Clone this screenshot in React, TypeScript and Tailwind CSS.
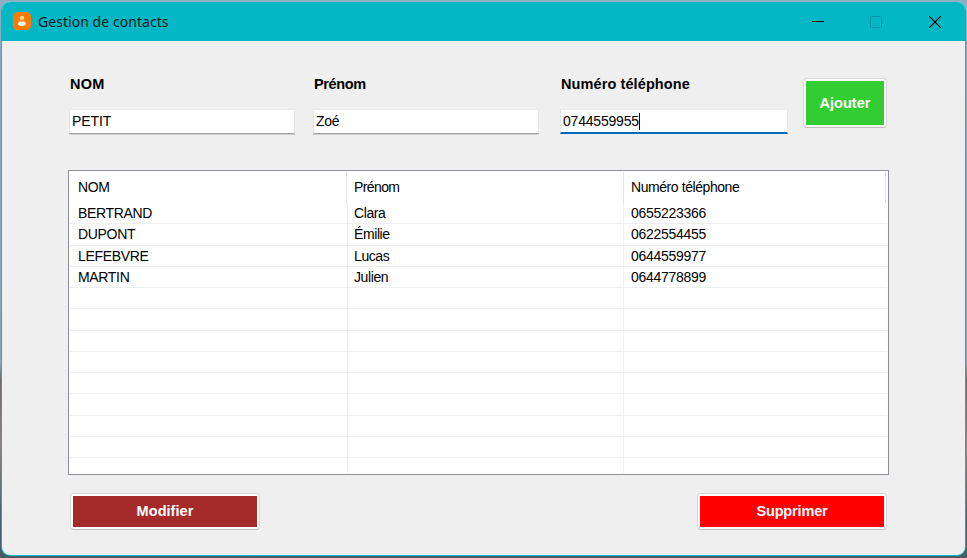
import React from "react";

const contacts = [
  ["BERTRAND", "Clara", "0655223366"],
  ["DUPONT", "Émilie", "0622554455"],
  ["LEFEBVRE", "Lucas", "0644559977"],
  ["MARTIN", "Julien", "0644778899"],
];
const rows = Array.from({ length: 12 }, (_, i) => contacts[i] ?? ["", "", ""]);

function Field({ label, value, className, labelClass, valueClass, focused = false }: {
  label: string; value: string; className: string; labelClass: string; valueClass: string; focused?: boolean;
}) {
  return (
    <label className={`block ${className}`}>
      <span className={`block h-[34px] pl-px text-[14.5px] leading-[19px] font-bold whitespace-nowrap ${labelClass}`}>{label}</span>
      <span className={`flex h-[25px] items-center border bg-white ${focused ? "border-x-[#e2e8ee] border-t-[#ececec] border-b-2 border-b-[#0067c0] pl-[2px]" : "border-x-[#e6e6e6] border-t-[#ebebeb] border-b-[#a0a0a0] pb-[2px] pl-[2px] shadow-[0_1px_0_#d0d0d0]"}`}>
        <span className={`text-[14px] leading-[20px] ${valueClass}`}>{value}</span>
        {focused && <span className="h-[17px] w-px bg-black" />}
      </span>
    </label>
  );
}

function ActionButton({ label, outer, fill, text }: { label: string; outer: string; fill: string; text: string }) {
  return (
    <button className={`block rounded-[4px] border border-[#d8d8d8] border-b-[#bebebe] bg-white p-[2px] ${outer}`}>
      <span className={`flex h-full w-full items-center justify-center text-[14.5px] leading-none font-bold text-white ${fill}`}>
        <span className={text}>{label}</span>
      </span>
    </button>
  );
}

export default function App() {
  return (
    <div className="h-[558px] w-[967px] overflow-hidden bg-[linear-gradient(180deg,#8bb1c2_0%,#8da9b5_65%,#6d6867_68%,#8b8583_80%,#425e69_94%,#4a5a63_100%)] pt-[2px] pl-px font-['Liberation_Sans',sans-serif] text-black">
      <div className="flex h-[554px] w-[965px] flex-col overflow-hidden rounded-[9px] border border-t-0 border-[#03b7c5] bg-[#efefef]">
        <header className="flex h-[39px] shrink-0 items-center bg-[#03b7c5] pl-[11px]">
          <svg width="18" height="18" viewBox="0 0 18 18" className="mb-px">
            <rect width="18" height="18" rx="4.5" fill="#ff7b00" />
            <circle cx="9" cy="6" r="2.2" fill="#ffd68a" />
            <path d="M5 12.4C5 10.4 6.6 9.2 7.6 9.2Q9 10.2 10.4 9.2C11.8 9.2 13 10.8 13 12.2Q11.8 14 9 14T5 12.4Z" fill="#fff" />
          </svg>
          <h1 className="ml-[7px] font-['Noto_Sans',sans-serif] text-[14px] leading-[20px] tracking-[0.05px] text-[#071c20]">Gestion de contacts</h1>
          <div className="mr-[24px] ml-auto flex items-center">
            <svg width="12" height="12" viewBox="0 0 12 12"><path d="M0 5.5H12" stroke="#000" /></svg>
            <svg className="ml-[46px]" width="12" height="12" viewBox="0 0 12 12"><rect x=".5" y=".5" width="11" height="11" rx="1" fill="none" stroke="#02929d" /></svg>
            <svg className="ml-[47px]" width="12" height="12" viewBox="0 0 12 12"><path d="M.3.3 11.7 11.7M11.7.3.3 11.7" stroke="#000" strokeWidth="1.2" /></svg>
          </div>
        </header>

        <main className="pt-[34px] pl-[66px]">
          <div className="flex">
            <Field label="NOM" value="PETIT" className="ml-px w-[226px]" labelClass="tracking-[0.3px]" valueClass="tracking-[-0.1px]" />
            <Field label="Prénom" value="Zoé" className="ml-[18px] w-[226px]" labelClass="tracking-[-0.35px]" valueClass="tracking-[-0.3px]" />
            <Field label="Numéro téléphone" value="0744559955" className="ml-[21px] w-[228px]" labelClass="tracking-[0.1px]" valueClass="tracking-[-0.2px]" focused />
            <ActionButton label="Ajouter" outer="ml-[15px] mt-[3px] h-[50px] w-[84px]" fill="bg-[#32cd32]" text="tracking-[0.05px]" />
          </div>

          <section className="mt-[36px] flex h-[305px] w-[821px] flex-col overflow-hidden border border-[#8c8f99] bg-white p-px text-[14px] leading-[20px]">
            <div className="flex h-[31px] shrink-0 items-center">
              <div className="flex h-full w-[277px] items-center border-r border-[#e5e5e5] pb-[2px] pl-[8px] tracking-[-0.4px]">NOM</div>
              <div className="flex h-full w-[277px] items-center border-r border-[#e5e5e5] pb-[2px] pl-[7px] tracking-[-0.6px]">Prénom</div>
              <div className="flex h-full w-[262px] items-center border-r border-[#e5e5e5] pb-[2px] pl-[7px] tracking-[-0.43px]">Numéro téléphone</div>
            </div>
            {rows.map(([name, first, phone], i) => (
              <div key={i} className="flex h-[21.27px] shrink-0 border-b border-[#efefef]">
                <div className="flex w-[278px] items-center border-r border-[#f1f1f1] pl-[8px] tracking-[-0.33px]">{name}</div>
                <div className="flex w-[276px] items-center border-r border-[#f1f1f1] pl-[6px] tracking-[-0.4px]">{first}</div>
                <div className="flex items-center pl-[7px] tracking-[-0.28px]">{phone}</div>
              </div>
            ))}
            <div className="flex flex-1">
              <div className="w-[278px] border-r border-[#f1f1f1]" />
              <div className="w-[276px] border-r border-[#f1f1f1]" />
            </div>
          </section>

          <div className="mt-[18px] flex w-[819px] justify-between pl-[2px]">
            <ActionButton label="Modifier" outer="h-[37px] w-[190px]" fill="bg-[#a52a2a]" text="tracking-[0.05px]" />
            <ActionButton label="Supprimer" outer="h-[37px] w-[190px]" fill="bg-[#ff0000]" text="tracking-[-0.15px]" />
          </div>
        </main>
      </div>
    </div>
  );
}
